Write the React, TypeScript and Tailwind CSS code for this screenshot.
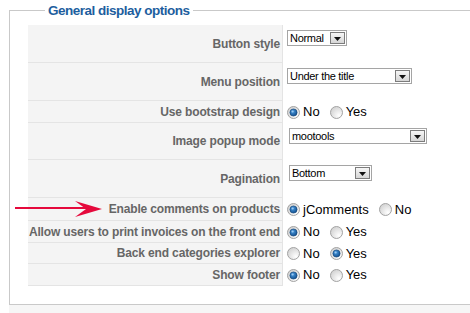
import React from 'react';

type Row =
  | { label: string; h: string; kind: 'select'; value: string; w: string; ml?: string }
  | { label: string; h: string; kind: 'radio'; options: string[]; checked: number };

const rows: Row[] = [
  { label: 'Button style', h: 'h-[38px]', kind: 'select', value: 'Normal', w: 'w-[60px]' },
  { label: 'Menu position', h: 'h-[38px]', kind: 'select', value: 'Under the title', w: 'w-[125px]' },
  { label: 'Use bootstrap design', h: 'h-[22px]', kind: 'radio', options: ['No', 'Yes'], checked: 0 },
  { label: 'Image popup mode', h: 'h-[37px]', kind: 'select', value: 'mootools', w: 'w-[138px]', ml: 'ml-[2px]' },
  { label: 'Pagination', h: 'h-[38px]', kind: 'select', value: 'Bottom', w: 'w-[83px]', ml: 'ml-[2px]' },
  { label: 'Enable comments on products', h: 'h-[23px]', kind: 'radio', options: ['jComments', 'No'], checked: 0 },
  { label: 'Allow users to print invoices on the front end', h: 'h-[22px]', kind: 'radio', options: ['No', 'Yes'], checked: 0 },
  { label: 'Back end categories explorer', h: 'h-[21px]', kind: 'radio', options: ['No', 'Yes'], checked: 1 },
  { label: 'Show footer', h: 'h-[22px]', kind: 'radio', options: ['No', 'Yes'], checked: 0 },
];

function Radio({ checked }: { checked: boolean }) {
  return (
    <svg width="13" height="13" viewBox="0 0 13 13" className="shrink-0">
      <circle cx="6.5" cy="6.5" r="6" fill="url(#radioFill)" stroke="#a3a3a3" />
      {checked && (
        <>
          <circle cx="6.5" cy="6.5" r="3.6" fill="url(#radioDot)" stroke="#0d3f73" strokeWidth="0.6" />
          <circle cx="5.6" cy="5.5" r="1.1" fill="#9cc8f0" />
        </>
      )}
    </svg>
  );
}

function Select({ value, w, ml }: { value: string; w: string; ml?: string }) {
  return (
    <div className={`flex h-[16px] items-center border border-[#a5a5a5] bg-white ${w} ${ml ?? ''}`}>
      <span className="flex-1 pl-[2px] text-[11px] leading-none tracking-[-0.3px] text-black">{value}</span>
      <span className="mr-[1px] flex h-[12px] w-[15px] items-end justify-center border border-[#7c7c7c] bg-gradient-to-b from-[#f6f6f6] to-[#d6d6d6] pb-[2px]">
        <svg width="7" height="4" viewBox="0 0 7 4">
          <path d="M0 0h7L3.5 4z" fill="#111" />
        </svg>
      </span>
    </div>
  );
}

export default function App() {
  return (
    <div className="relative h-[313px] w-[470px] overflow-hidden bg-white pt-[2px] font-['Liberation_Sans',Arial,sans-serif]">
      <svg width="0" height="0" className="absolute">
        <defs>
          <radialGradient id="radioFill" cx="0.7" cy="0.75" r="0.8">
            <stop offset="0" stopColor="#ffffff" />
            <stop offset="1" stopColor="#d2d2d2" />
          </radialGradient>
          <radialGradient id="radioDot" cx="0.4" cy="0.35" r="0.7">
            <stop offset="0" stopColor="#4b9be0" />
            <stop offset="1" stopColor="#0f4c8c" />
          </radialGradient>
        </defs>
      </svg>

      <fieldset className="ml-[9px] w-[480px] border border-[#c9c9c9] pb-[18px] pl-[18px] pt-[6px]">
        <legend className="ml-[17px] px-[3px] text-[13.5px] font-bold leading-[17px] tracking-[-0.5px] text-[#1d5e9e]">
          General display options
        </legend>

        {rows.map((r) => (
          <div key={r.label} className={`flex ${r.h}`}>
            <div className="flex w-[255px] items-center justify-end whitespace-nowrap border-b border-r border-[#e4e4e4] bg-[#f4f4f4] pr-[2px] text-[12px] font-bold tracking-[-0.15px] text-[#666]">
              {r.label}
            </div>
            {r.kind === 'select' ? (
              <div className="pl-[4px] pt-[5px]">
                <Select value={r.value} w={r.w} ml={r.ml} />
              </div>
            ) : (
              <div className="flex items-center pl-[4px] text-[13px] text-black">
                {r.options.map((o, i) => (
                  <span key={o} className={`flex items-center ${i > 0 ? 'ml-[10px]' : ''}`}>
                    <Radio checked={i === r.checked} />
                    <span className="ml-[3px]">{o}</span>
                  </span>
                ))}
              </div>
            )}
          </div>
        ))}
      </fieldset>
      <div className="ml-[9px] h-[20px] bg-[#f6f6f6]" />

      <svg className="absolute left-0 top-[199px]" width="110" height="20" viewBox="0 0 110 20">
        <path d="M15 9h72" stroke="#e5093c" strokeWidth="2" />
        <path d="M75 2 L102 10 L75 18 L86 10 Z" fill="#e5093c" />
      </svg>
    </div>
  );
}
